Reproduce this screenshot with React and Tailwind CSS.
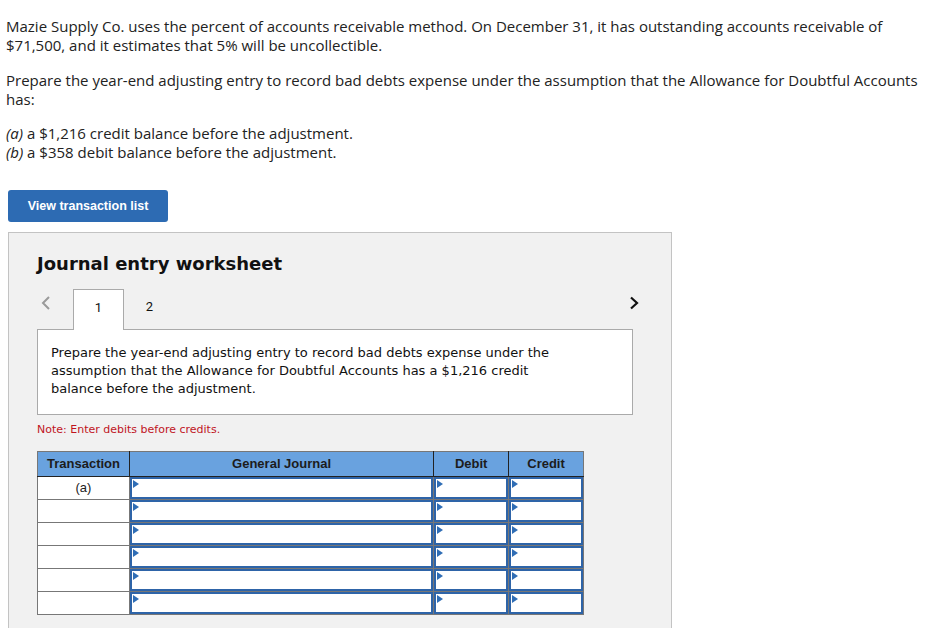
import React from "react";

const Tri = () => (
  <svg className="absolute left-[1px] top-[1px]" width="6" height="8" viewBox="0 0 6 8">
    <path d="M0 0 L6 4 L0 8 Z" fill="#2f6db5" />
  </svg>
);

function InputCell() {
  return (
    <td className="border border-[#777] p-0 h-[23px]">
      <div className="relative h-[22px] border-2 border-[#2e64a8] bg-white">
        <Tri />
      </div>
    </td>
  );
}

export default function App() {
  const rows = ["(a)", "", "", "", "", ""];
  return (
    <div className="w-[941px] h-[628px] overflow-hidden bg-white text-[#000]" style={{ fontFamily: "'Open Sans', 'Liberation Sans', sans-serif" }}>
      <div className="pl-[6px] pt-[17px] pr-[10px] text-[15px] leading-[19px] text-[#222]">
        <p>
          Mazie Supply Co. uses the percent of accounts receivable method. On December 31, it has outstanding accounts receivable of
          $71,500, and it estimates that 5% will be uncollectible.
        </p>
        <p className="mt-[16px]">
          Prepare the year-end adjusting entry to record bad debts expense under the assumption that the Allowance for Doubtful Accounts
          has:
        </p>
        <p className="mt-[15px]">
          <i>(a)</i> a $1,216 credit balance before the adjustment.
          <br />
          <i>(b)</i> a $358 debit balance before the adjustment.
        </p>
      </div>
      <div className="pl-[8px] mt-[28px]">
        <button className="h-[32px] w-[160px] rounded-[3px] bg-[#2d6bb3] text-white text-[12.5px] font-bold" style={{ fontFamily: "'Liberation Sans', Arial, sans-serif" }}>
          View transaction list
        </button>
      </div>
      <div className="ml-[8px] mt-[10px] w-[664px] h-[430px] border border-[#c3c3c3] bg-[#f1f1f1] pl-[28px] pr-[38px]" style={{ fontFamily: "'DejaVu Sans', Verdana, sans-serif" }}>
        <h2 className="mt-[20px] text-[18px] font-bold leading-[22px] text-[#111]">Journal entry worksheet</h2>
        <div className="mt-[14px] flex items-end h-[41px] relative">
          <span className="absolute left-[3px] top-[6px]">
            <svg width="12" height="16" viewBox="0 0 12 16"><path d="M9 2 L3 8 L9 14" fill="none" stroke="#9a9a9a" strokeWidth="2" /></svg>
          </span>
          <div className="ml-[36px] w-[51px] h-[41px] bg-white border border-b-0 border-[#aaa] flex justify-center pt-[8px] text-[13px] text-[#111]" style={{ fontFamily: "Roboto, sans-serif" }}>1</div>
          <div className="w-[51px] h-[41px] flex justify-center pt-[8px] text-[13px] text-[#111]" style={{ fontFamily: "Roboto, sans-serif" }}>2</div>
          <span className="absolute right-[-7px] top-[7px]">
            <svg width="12" height="14" viewBox="0 0 12 14"><path d="M3 1.5 L9 7 L3 12.5" fill="none" stroke="#111" strokeWidth="2.2" /></svg>
          </span>
        </div>
        <div className="-mt-px w-[596px] h-[86px] bg-white border border-[#aaa] pl-[13px] pr-[64px] pt-[14px] text-[13px] leading-[18px] text-[#111]">
          Prepare the year-end adjusting entry to record bad debts expense under the assumption that the Allowance for Doubtful Accounts has a $1,216 credit balance before the adjustment.
        </div>
        <div className="mt-[8px] text-[11px] leading-[14px] text-[#c0141e]">Note: Enter debits before credits.</div>
        <table className="mt-[14px] border-collapse w-[547px]" style={{ fontFamily: "'Liberation Sans', Arial, sans-serif" }}>
          <thead>
            <tr className="bg-[#69a2df] h-[25px] text-[13px] font-bold text-[#1c1c1c]">
              <th className="w-[92px] border border-[#777] border-b-[#222] border-r-[#222] font-bold">Transaction</th>
              <th className="w-[305px] border border-[#777] border-b-[#222] border-r-[#222] font-bold">General Journal</th>
              <th className="w-[75px] border border-[#777] border-b-[#222] border-r-[#222] font-bold">Debit</th>
              <th className="w-[75px] border border-[#777] border-b-[#222] font-bold">Credit</th>
            </tr>
          </thead>
          <tbody>
            {rows.map((r, i) => (
              <tr key={i}>
                <td className="border border-[#777] bg-white text-center align-top pt-[4px] text-[13px] leading-[14px] text-[#222] h-[23px]">{r}</td>
                <InputCell />
                <InputCell />
                <InputCell />
              </tr>
            ))}
          </tbody>
        </table>
      </div>
    </div>
  );
}
